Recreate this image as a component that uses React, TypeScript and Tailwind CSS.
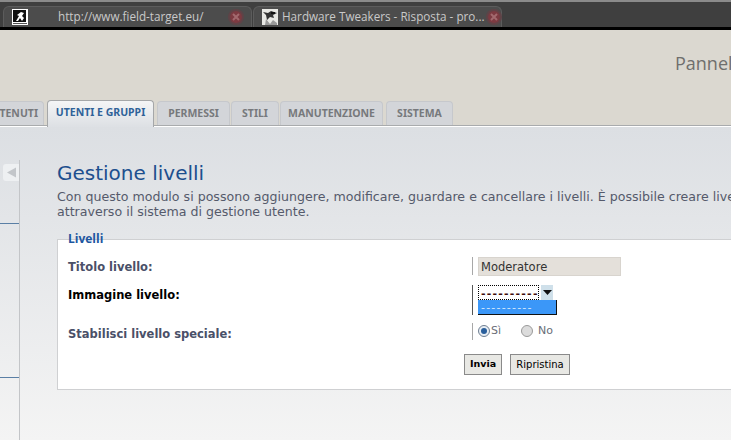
function Close() {
  return (
    <svg width="18" height="18" viewBox="0 0 18 18" className="shrink-0">
      <circle cx="9" cy="9" r="8" fill="#5f4347" />
      <circle cx="9" cy="9" r="6" fill="#7c3a41" />
      <path d="M6 6l6 6M12 6l-6 6" stroke="#a2696e" strokeWidth="2" />
    </svg>
  );
}

function Favicon1() {
  return (
    <svg width="16" height="16" viewBox="0 0 16 16" className="shrink-0">
      <rect width="16" height="16" fill="#fff" />
      <rect x="1" y="1" width="13" height="12" fill="#111" />
      <path d="M4 12l3-5-2-1 4-3 3 1-2 3 2 2-2 3-2-3-2 3z" fill="#fff" />
      <rect x="1" y="14" width="14" height="1" fill="#555" />
    </svg>
  );
}

function Favicon2() {
  return (
    <svg width="16" height="16" viewBox="0 0 16 16" className="shrink-0">
      <rect width="16" height="16" fill="#e8e8e4" />
      <path d="M1 3l5 1 3-2 6 2-4 2 1 3-4-1-3 3-1-5z" fill="#333" />
      <path d="M4 10l4 5 3-4 4 3v2H3z" fill="#999" />
      <rect x="9" y="3" width="4" height="2" fill="#111" />
    </svg>
  );
}

const tabClass =
  "h-[24px] flex items-center justify-center rounded-t-[4px] border border-b-0 border-[#c6c8cc] bg-[#d3d5d9] text-[#77797c] text-[10.5px] font-bold";

function Label({ children, dark, className }: { children: React.ReactNode; dark?: boolean; className?: string }) {
  return (
    <div
      className={`w-[404px] shrink-0 text-[11.5px] leading-[14px] font-bold ${dark ? "text-black" : "text-[#4a5068]"} ${className ?? ""}`}
    >
      {children}
    </div>
  );
}

export default function App() {
  return (
    <div className="w-[731px] h-[440px] overflow-hidden flex flex-col font-['DejaVu_Sans',sans-serif] bg-[#dbd8d0]">
      {/* browser tabs */}
      <div className="h-[30px] shrink-0 bg-[#3f3f3f] border-t-2 border-b-[3px] border-t-[#8b8b8b] border-b-black flex items-end pl-[3px] gap-px font-['Open_Sans',sans-serif] text-[11.7px] text-[#c9c9c9]">
        <div className="w-[249px] h-[21px] rounded-t-[6px] bg-[#4c4c4c] border border-b-0 border-[#5c5c5c] flex items-center pl-[8px] pr-[6px]">
          <Favicon1 />
          <span className="ml-[30px] flex-1 whitespace-nowrap">http://www.field-target.eu/</span>
          <Close />
        </div>
        <div className="w-[249px] h-[21px] rounded-t-[6px] bg-[#4c4c4c] border border-b-0 border-[#5c5c5c] flex items-center pl-[8px] pr-[6px]">
          <Favicon2 />
          <span className="ml-[4px] flex-1 whitespace-nowrap">Hardware Tweakers - Risposta - pro...</span>
          <Close />
        </div>
      </div>

      {/* header */}
      <div className="h-[95px] shrink-0 relative flex flex-col">
        <div className="h-[70px] flex justify-end pt-[21px]">
          <span className="w-[56px] overflow-hidden whitespace-nowrap font-['Open_Sans',sans-serif] text-[18px] leading-[24px] font-medium text-[#6f6f6d]">
            Pannello
          </span>
        </div>
        <div className="h-[25px] flex items-end font-['Noto_Sans',sans-serif] ml-[-30px] gap-[1px]">
          <div className={`${tabClass} w-[74px] mr-[2px]`}>CONTENUTI</div>
          <div className="h-[24px] w-[105px] flex items-center justify-center rounded-t-[4px] border border-b-0 border-[#a5a7a9] bg-gradient-to-b from-[#f4f5f6] to-[#dde0e4] text-[#2f6299] text-[10.5px] font-bold mr-[2px] relative z-10 -mb-[2px] pb-[2px] box-content">
            UTENTI E GRUPPI
          </div>
          <div className={`${tabClass} w-[73px]`}>PERMESSI</div>
          <div className={`${tabClass} w-[48px]`}>STILI</div>
          <div className={`${tabClass} w-[103px] mr-[2px]`}>MANUTENZIONE</div>
          <div className={`${tabClass} w-[67px]`}>SISTEMA</div>
        </div>
      </div>

      {/* body */}
      <div className="flex-1 min-h-0 border-t border-[#a9abad] bg-white pt-px">
        <div className="h-full flex bg-gradient-to-b from-[#dcdfe3] to-[#f4f4f4]">
          {/* sidebar */}
          <div className="w-[20px] shrink-0 pt-[33px]">
            <div className="h-full border-r border-[#c3c5c8] flex flex-col">
              <div className="ml-[3px] w-[16px] h-[17px] bg-[#eef0f2] rounded-l-[3px] flex items-center justify-center mt-[4px]">
                <svg width="11" height="11" viewBox="0 0 11 11">
                  <path d="M1 5.5L10 0.5v10z" fill="#c3c6ca" />
                </svg>
              </div>
              <div className="h-px bg-[#5a7fa5] mt-[42px]" />
              <div className="h-px bg-[#5a7fa5] mt-[153px]" />
            </div>
          </div>

          {/* main */}
          <div className="w-[900px] shrink-0 pl-[37px] pt-[35px]">
            <h1 className="text-[20px] leading-[22px] text-[#1d4f8e] whitespace-nowrap">Gestione livelli</h1>
            <p className="mt-[5px] text-[12.6px] leading-[15px] text-[#555a6b] whitespace-nowrap">
              Con questo modulo si possono aggiungere, modificare, guardare e cancellare i livelli. È possibile creare livelli
              <br />
              attraverso il sistema di gestione utente.
            </p>

            <div className="mt-[20px] h-[151px] bg-white border border-[#cfd0d2] pl-[10px] flex flex-col">
              <div className="h-[12px] -mt-[7px] font-['Open_Sans',sans-serif] text-[12px] leading-[12px] font-bold text-[#1d56a0]">
                Livelli
              </div>

              <div className="flex items-center mt-[11px] h-[20px]">
                <Label className="pt-[2px]">Titolo livello:</Label>
                <div className="h-[18px] border-l border-[#a8a8a8] pl-[5px] flex items-center">
                  <div className="w-[143px] h-[19px] bg-[#e4e0da] border border-[#d8d4ce] pl-[2px] text-[11.5px] leading-[18px] text-[#333]">
                    Moderatore
                  </div>
                </div>
              </div>

              <div className="flex mt-[9px] h-[30px]">
                <Label dark>
                  <div className="mt-[3px]">Immagine livello:</div>
                </Label>
                <div className="border-l border-[#555] pl-[5px] relative">
                  <div className="flex">
                    <div className="w-[61px] h-[15px] border border-dotted border-black text-[11px] leading-[16px] pl-[2px] text-[#3a0a0a] font-bold tracking-[1.2px] whitespace-nowrap overflow-hidden">
                      ----------
                    </div>
                    <div className="w-[12px] h-[15px] ml-[2px] bg-[#cfe0ea] flex items-center justify-center">
                      <svg width="9" height="5" viewBox="0 0 9 5">
                        <path d="M0 0h9L4.5 5z" fill="#111" />
                      </svg>
                    </div>
                  </div>
                  {/* open dropdown overlay */}
                  <div className="absolute left-[5px] top-[15px] w-[79px] h-[15px] bg-[#3b97f8] border-r border-b border-[#111] text-[11px] leading-[16px] pl-[3px] text-[#d5e8fc] tracking-[1.2px] whitespace-nowrap">
                    ----------
                  </div>
                </div>
              </div>

              <div className="flex items-center mt-[8px] h-[18px]">
                <Label className="pt-[3px]">Stabilisci livello speciale:</Label>
                <div className="h-[17px] -mt-[2px] border-l border-[#a8a8a8] pl-[5px] flex items-center text-[11px] text-[#6a6d78]">
                  <span className="w-[12px] h-[12px] rounded-full bg-[#e8eef4] border border-[#6f7f92] flex items-center justify-center">
                    <span className="w-[6px] h-[6px] rounded-full bg-[#2a5f9c]" />
                  </span>
                  <span className="ml-px w-[30px]">Sì</span>
                  <span className="w-[12px] h-[12px] rounded-full bg-[#dcdcdc] border border-[#9a9a9a]" />
                  <span className="ml-[5px]">No</span>
                </div>
              </div>

              <div className="flex mt-[13px] ml-[396px] gap-[8px]">
                <button className="w-[38px] h-[21px] bg-[#e8e8e4] border border-[#8a8a8a] text-[9.5px] font-bold text-black">
                  Invia
                </button>
                <button className="w-[60px] h-[21px] bg-[#e8e8e4] border border-[#8a8a8a] text-[10px] text-black">
                  Ripristina
                </button>
              </div>
            </div>
          </div>
        </div>
      </div>
    </div>
  );
}
